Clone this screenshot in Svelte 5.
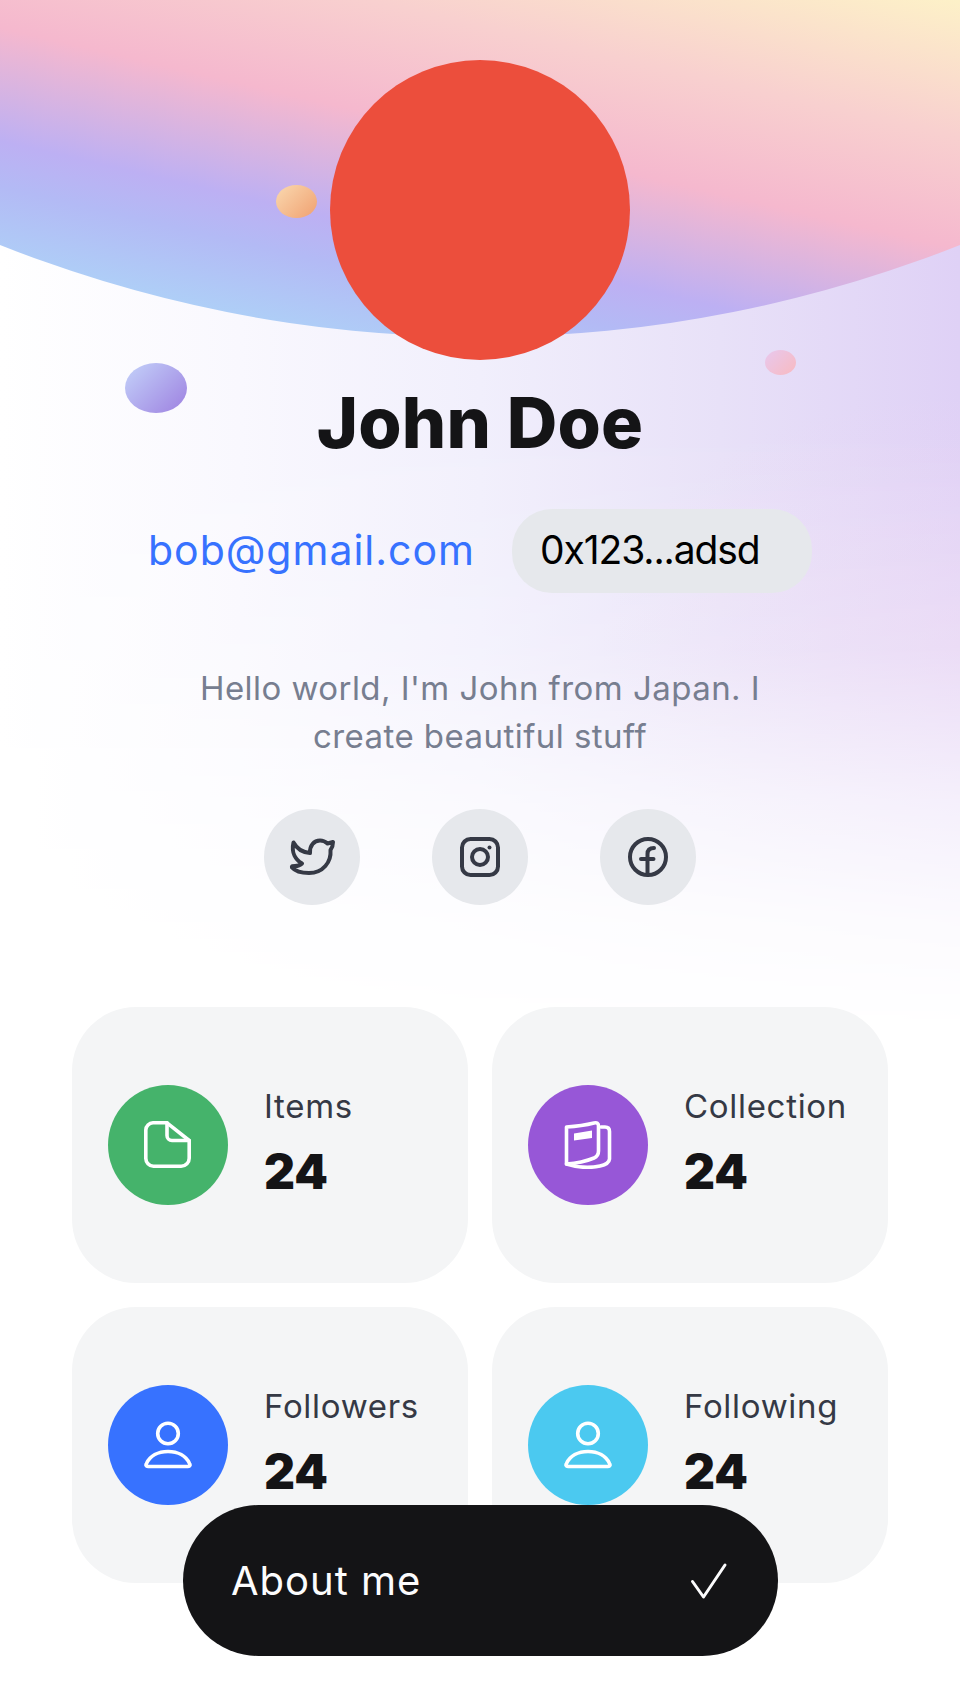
<script>
  const socials = ['twitter', 'instagram', 'facebook'];
  const stats = [
    { label: 'Items', value: 24, color: '#45b36b', icon: 'doc' },
    { label: 'Collection', value: 24, color: '#9757d7', icon: 'book' },
    { label: 'Followers', value: 24, color: '#3772ff', icon: 'user' },
    { label: 'Following', value: 24, color: '#4bc9f0', icon: 'user' }
  ];
</script>

<div class="page">
  <div class="wash"></div>
  <div class="hero"></div>
  <span class="blob orange"></span>
  <span class="blob violet"></span>
  <span class="blob pink"></span>

  <main>
    <div class="avatar"></div>
    <h1>John Doe</h1>

    <div class="contact">
      <a href="#top" class="email">bob@gmail.com</a>
      <div class="wallet">0x123...adsd</div>
    </div>

    <p class="bio">Hello world, I'm John from Japan. I create beautiful stuff</p>

    <div class="socials">
      {#each socials as name}
        <div class="social">
          <svg viewBox="0 0 48 48" width="48" height="48">
            {#if name === 'twitter'}
              <path d="M5.5 9.5C8.5 15 14.5 19.5 22 20C21.5 12.5 26 7.5 32 7.5C35 7.5 37.5 8.7 39.5 10.5L45 9C45 12 44 15 42.5 17C43.5 29 35 40 21 40C14 40 7 38 4 34.5C3.5 33 5 33 7 33C10 33 12.5 32 14 30.5C8 27 3 20 5.5 9.5Z" />
            {:else if name === 'instagram'}
              <rect x="6" y="6" width="36" height="36" rx="8.5" />
              <circle cx="24" cy="24" r="8" />
              <circle class="dot" cx="33.5" cy="14.5" r="2" />
            {:else}
              <circle cx="24" cy="24" r="18" />
              <path d="M23.5 41.5V21C23.5 17 25.5 15 30 15M17 26H29.5" />
            {/if}
          </svg>
        </div>
      {/each}
    </div>

    <div class="stats">
      {#each stats as stat}
        <div class="card">
          <div class="badge" style="background: {stat.color}">
            <svg viewBox="0 0 48 48" width="48" height="48">
              {#if stat.icon === 'doc'}
                <path d="M9 1.8H23L45.2 19.5V37A8 8 0 0 1 37.2 45.2H9.5A8 8 0 0 1 1.8 37V9A7.5 7.5 0 0 1 9 1.8Z" />
                <path d="M23 1.8V14.5A5 5 0 0 0 28 19.5H45.2" />
              {:else if stat.icon === 'book'}
                <path d="M2.5 6Q18 5 30 2Q34.5 1 34.5 5V30Q34.5 35 30 37Q18 42 2.5 43Z" />
                <path d="M37 6H41Q45.5 6 45.5 10.5V38Q45 43 36 45Q20 48.5 2.5 43" />
                <path class="dot" d="M10 12.5L28 9.5V17L10 19.5Z" />
              {:else}
                <circle cx="24" cy="12.5" r="10.3" />
                <path d="M4 45.5C2 45.5 1.5 44 2.5 42.5C6 35 14 30.5 24 30.5C34 30.5 42 35 45.5 42.5C46.5 44 46 45.5 44 45.5Z" />
              {/if}
            </svg>
          </div>
          <div class="stat-text">
            <div class="label">{stat.label}</div>
            <div class="value">{stat.value}</div>
          </div>
        </div>
      {/each}
    </div>
  </main>

  <button class="about">
    <span>About me</span>
    <svg viewBox="0 0 48 48" width="48" height="48">
      <path d="M10.5 24.5L21.5 40L43 8" />
    </svg>
  </button>
</div>

<style>
  :global(body) {
    margin: 0;
    background: #fff;
  }

  .page {
    position: relative;
    width: 960px;
    height: 1704px;
    overflow: hidden;
    background: #fff;
    font-family: Inter, "Liberation Sans", sans-serif;
  }

  .wash {
    position: absolute;
    inset: 0 0 auto 0;
    height: 1040px;
    background:
      radial-gradient(ellipse 360px 260px at 100% 650px, rgba(240, 214, 240, 0.4), rgba(240, 214, 240, 0) 100%),
      linear-gradient(90deg, #fff 0%, #f9f8fe 25%, #f1effc 50%, #e8e1f8 75%, #dfd1f6 100%);
    mask-image: linear-gradient(180deg, #000 0, #000 430px, rgba(0, 0, 0, 0.78) 650px, rgba(0, 0, 0, 0.35) 800px, rgba(0, 0, 0, 0.1) 920px, rgba(0, 0, 0, 0) 1030px);
  }

  .hero {
    position: absolute;
    inset: 0 0 auto 0;
    height: 345px;
    background: linear-gradient(193deg, #fdf1c8 0%, #f8d0cf 24%, #f5b8ce 44%, #bdb0f3 64%, #b3baf5 72%, #aed0f7 86%);
    clip-path: ellipse(1298px 1298px at 50% -961px);
  }

  .blob {
    position: absolute;
    border-radius: 50%;
  }

  .orange {
    left: 276px;
    top: 185px;
    width: 41px;
    height: 33px;
    background: linear-gradient(135deg, #fad9b0, #f0a070);
  }

  .violet {
    left: 125px;
    top: 363px;
    width: 62px;
    height: 50px;
    background: linear-gradient(135deg, #c4d3fa, #9d80e0);
  }

  .pink {
    left: 765px;
    top: 350px;
    width: 31px;
    height: 25px;
    background: linear-gradient(135deg, #e8c8ee, #f8bac0);
  }

  main {
    position: relative;
    display: flex;
    flex-direction: column;
    align-items: center;
    padding: 60px 72px 0;
  }

  .avatar {
    width: 300px;
    height: 300px;
    border-radius: 50%;
    background: #ec4e3c;
  }

  h1 {
    margin: 21px 0 0;
    font-size: 70px;
    line-height: 84px;
    font-weight: 800;
    color: #141416;
    letter-spacing: 0.2px;
  }

  .contact {
    display: flex;
    align-items: center;
    gap: 37px;
    margin-top: 44px;
  }

  .email {
    padding-bottom: 2px;
    font-size: 41px;
    letter-spacing: 1px;
    color: #3772ff;
    text-decoration: none;
  }

  .wallet {
    box-sizing: border-box;
    width: 300px;
    height: 84px;
    padding-left: 28px;
    border-radius: 40px;
    background: #e6e8ec;
    color: #000;
    font-size: 39px;
    letter-spacing: -1.1px;
    line-height: 82px;
  }

  .bio {
    width: 600px;
    margin: 71px 0 0;
    font-size: 33px;
    letter-spacing: 0.45px;
    line-height: 48px;
    text-align: center;
    color: #777e90;
  }

  .socials {
    display: flex;
    gap: 72px;
    margin-top: 49px;
  }

  .social {
    display: flex;
    align-items: center;
    justify-content: center;
    width: 96px;
    height: 96px;
    border-radius: 50%;
    background: #e6e8ec;
  }

  svg {
    fill: none;
    stroke-width: 3;
    stroke-linecap: round;
    stroke-linejoin: round;
  }

  .social svg {
    stroke: #353945;
    stroke-width: 4;
  }

  .social .dot {
    fill: #353945;
    stroke: none;
  }

  .stats {
    display: grid;
    grid-template-columns: 396px 396px;
    gap: 24px;
    margin-top: 102px;
  }

  .card {
    display: flex;
    align-items: center;
    gap: 36px;
    height: 276px;
    padding-left: 36px;
    border-radius: 64px;
    background: #f4f5f6;
  }

  .badge {
    display: flex;
    align-items: center;
    justify-content: center;
    flex: none;
    width: 120px;
    height: 120px;
    border-radius: 50%;
  }

  .badge svg {
    stroke: #fff;
    stroke-width: 3.6;
  }

  .badge .dot {
    fill: #fff;
    stroke: none;
  }

  .stat-text {
    padding-bottom: 6px;
  }

  .label {
    font-size: 33px;
    letter-spacing: 0.7px;
    line-height: 48px;
    color: #353945;
  }

  .value {
    margin-top: 12px;
    font-size: 48px;
    line-height: 60px;
    font-weight: 900;
    color: #141416;
  }

  .about {
    position: absolute;
    left: 183px;
    bottom: 48px;
    display: flex;
    align-items: center;
    justify-content: space-between;
    box-sizing: border-box;
    width: 595px;
    height: 151px;
    padding: 0 48px;
    border: 0;
    border-radius: 76px;
    background: #141416;
    color: #fcfcfd;
    font: inherit;
    font-size: 40px;
    letter-spacing: 1px;
  }

  .about svg {
    stroke: #fcfcfd;
  }
</style>
